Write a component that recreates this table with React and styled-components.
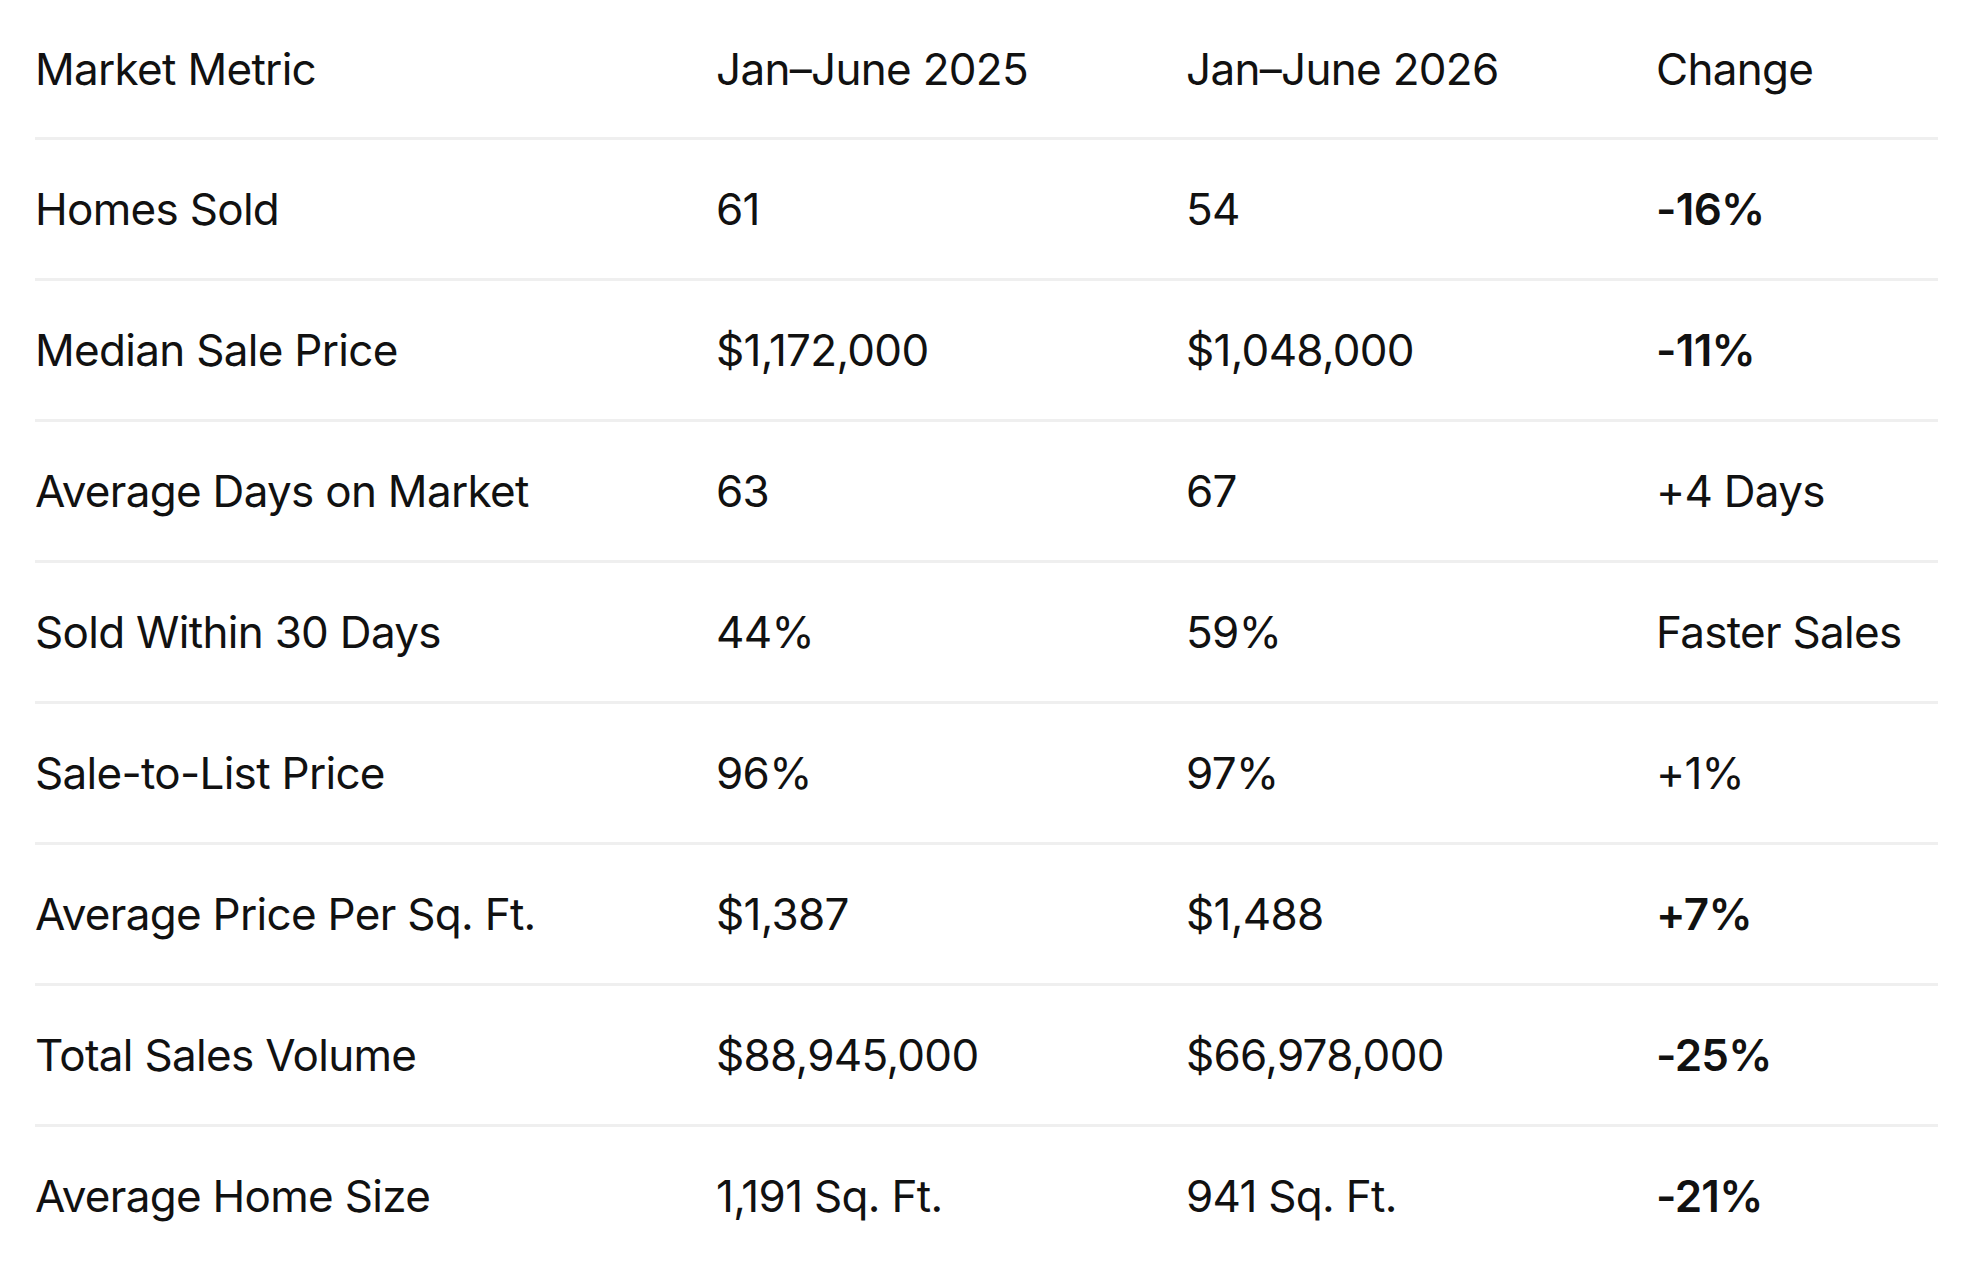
import React from 'react'
import styled, { createGlobalStyle } from 'styled-components';

const GlobalStyle=createGlobalStyle`
    html,body{
        margin:0;
        padding:0;
        background:#ffffff;
    }
    body{
        font-family:Inter,"Noto Sans",sans-serif;
        color:#111111;
    }
`;

const Page=styled.div`
    padding:0 38px 0 35px;
`;

const Table=styled.div`
    display:flex;
    flex-direction:column;
    width:100%;
`;

const Row=styled.div`
    display:grid;
    grid-template-columns:681px 470px 470px 1fr;
    align-items:center;
    height:${p=>p.$head?'137px':'138px'};
    border-bottom:${p=>p.$last?'none':'3px solid #efefef'};
`;

const Cell=styled.div`
    font-size:44px;
    line-height:1;
    letter-spacing:-0.7px;
    font-weight:${p=>p.$bold?600:400};
    white-space:nowrap;
`;

const rows=[
    {metric:'Homes Sold',a:'61',b:'54',change:'-16%',bold:true},
    {metric:'Median Sale Price',a:'$1,172,000',b:'$1,048,000',change:'-11%',bold:true},
    {metric:'Average Days on Market',a:'63',b:'67',change:'+4 Days'},
    {metric:'Sold Within 30 Days',a:'44%',b:'59%',change:'Faster Sales'},
    {metric:'Sale-to-List Price',a:'96%',b:'97%',change:'+1%'},
    {metric:'Average Price Per Sq. Ft.',a:'$1,387',b:'$1,488',change:'+7%',bold:true},
    {metric:'Total Sales Volume',a:'$88,945,000',b:'$66,978,000',change:'-25%',bold:true},
    {metric:'Average Home Size',a:'1,191 Sq. Ft.',b:'941 Sq. Ft.',change:'-21%',bold:true},
];

export default function App() {
  return (
    <>
    <GlobalStyle/>
    <Page>
        <Table>
            <Row $head>
                <Cell>Market Metric</Cell>
                <Cell>Jan–June 2025</Cell>
                <Cell>Jan–June 2026</Cell>
                <Cell>Change</Cell>
            </Row>
            {rows.map((r,i)=>(
                <Row key={r.metric} $last={i===rows.length-1}>
                    <Cell>{r.metric}</Cell>
                    <Cell>{r.a}</Cell>
                    <Cell>{r.b}</Cell>
                    <Cell $bold={r.bold}>{r.change}</Cell>
                </Row>
            ))}
        </Table>
    </Page>
    </>
  )
}
